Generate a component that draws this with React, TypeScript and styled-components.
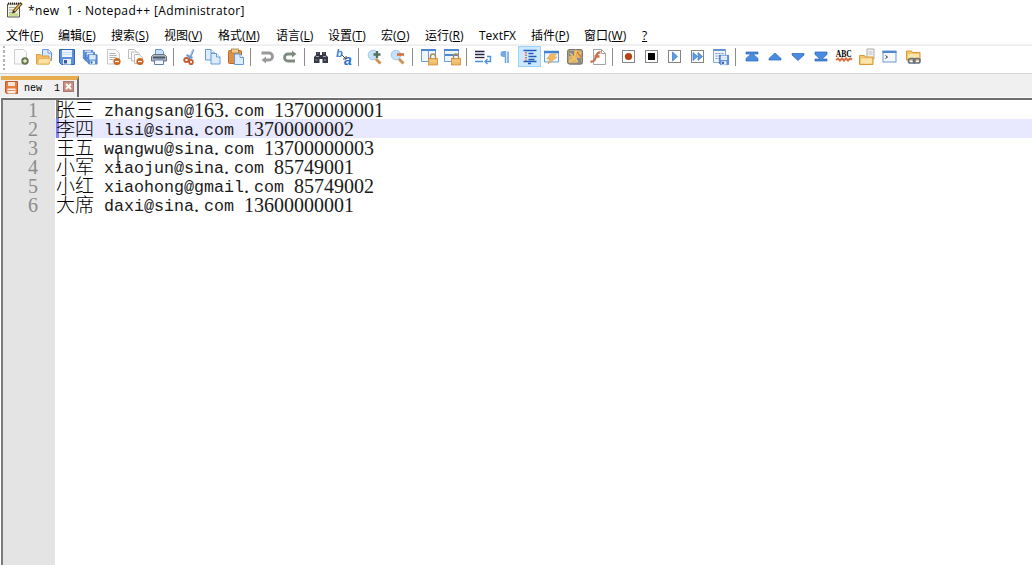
import React from "react";
import styled, { createGlobalStyle } from "styled-components";

const Global = createGlobalStyle`
  * { box-sizing: border-box; }
  html, body { margin: 0; padding: 0; background: #fff; overflow: hidden; }
`;

const Window = styled.div`
  width: 1032px;
  height: 565px;
  display: flex;
  flex-direction: column;
  background: #fff;
  overflow: hidden;
  color: #000;
  font-family: "Open Sans", "Noto Sans CJK SC", sans-serif;
`;

const TitleBar = styled.header`
  height: 24px;
  flex: none;
  display: flex;
  padding: 1px 0 0 6px;
  gap: 5px;
`;

const Title = styled.h1`
  margin: 0;
  font-size: 12px;
  font-weight: 400;
  line-height: 19px;
  letter-spacing: 0.37px;
  white-space: pre;
`;

const MenuBar = styled.nav`
  height: 22px;
  flex: none;
  display: flex;
  padding: 2px 0 0 6px;
  border-bottom: 2px solid #f0f0f0;
`;

const MenuItem = styled.span<{ $w: number }>`
  width: ${(p) => p.$w}px;
  flex: none;
  font-size: 12px;
  line-height: 19px;
  white-space: nowrap;
  u { text-underline-offset: 1px; text-decoration-thickness: 1px; }
`;

const ToolBar = styled.div`
  height: 28px;
  flex: none;
  display: flex;
  align-items: flex-start;
  border-bottom: 1px solid #d5d5d5;
`;

const Grip = styled.div`
  width: 2px;
  height: 26px;
  margin: 0 5px 0 3px;
  background: repeating-linear-gradient(#b4b4b4 0 2px, #fff 2px 4.5px);
`;

const ToolButton = styled.span<{ $on?: boolean }>`
  width: 23px;
  height: 21px;
  flex: none;
  padding: 3px 0 0 3px;
  background: ${(p) => (p.$on ? "#cce8ff" : "transparent")};
  box-shadow: ${(p) => (p.$on ? "inset 0 0 0 1px #99d1ff" : "none")};
`;

const Separator = styled.span`
  width: 8px;
  height: 18px;
  flex: none;
  margin-top: 2px;
  background: linear-gradient(90deg, transparent 2px, #8c8c8c 2px 3px, transparent 3px);
`;

const Glyph = styled.svg`
  display: block;
  flex: none;
  width: 17px;
  height: 17px;
  overflow: visible;
`;

const TabStrip = styled.div`
  height: 24px;
  flex: none;
  display: flex;
  padding: 2px 0 0 1px;
  background: #f0f0f0;
  border-bottom: 1px solid #fbfbfb;
`;

const Tab = styled.div`
  width: 78px;
  height: 21px;
  display: flex;
  border-top: 4px solid #e8ad4e;
  border-right: 2px solid #6e6e6e;
  padding: 1px 0 0 4px;
`;

const TabLabel = styled.span`
  width: 39px;
  margin-left: 2px;
  flex: none;
  font-family: "Liberation Mono", monospace;
  font-size: 10px;
  line-height: 15px;
  white-space: pre;
`;

const CloseMark = styled.svg`
  flex: none;
  display: block;
  width: 11px;
  height: 11px;
`;

const Editor = styled.main`
  flex: 1;
  margin-left: 1px;
  display: flex;
  border-top: 2px solid #6e6e6e;
  border-left: 2px solid #7b7b7b;
  position: relative;
`;

const Gutter = styled.div`
  width: 52px;
  flex: none;
  background: #e4e4e4;
  color: #8c8c8c;
  font-family: "Liberation Serif", serif;
  font-size: 20px;
  text-align: right;
  padding-right: 17px;
`;

const LineNumber = styled.div`
  height: 19px;
  line-height: 20px;
`;

const Lines = styled.div`
  flex: 1;
`;

const Line = styled.div<{ $active?: boolean; $mark?: string }>`
  height: 19px;
  line-height: 18px;
  display: flex;
  background: ${(p) => (p.$active ? "#e8e8ff" : "#fff")};
  &::before {
    content: "";
    width: 3px;
    margin: 0 -3px 0 1px;
    background: ${(p) => p.$mark ?? "transparent"};
  }
`;

const Code = styled.span`
  white-space: pre;
  color: #1a1a1a;
  font-family: "Liberation Mono", monospace;
  font-size: 16.66px;
`;

const Han = styled.span`
  font-family: "Noto Sans CJK SC", sans-serif;
  font-weight: 300;
  font-size: 19px;
  color: #000;
`;

const Latin = styled.span`
  line-height: 1;
  vertical-align: 1px;
`;

const Digits = styled.span`
  font-family: "Liberation Serif", serif;
  font-size: 20px;
`;

const Dot = styled(Digits)`
  letter-spacing: 5px;
`;

const Pointer = styled.svg`
  position: absolute;
  left: 112px;
  top: 52px;
  width: 6px;
  height: 16px;
`;

const Page = () => (
  <path d="M2.5.5h8l4 4v10.5h-12z" fill="#fafafa" stroke="#c9c9c9" />
);
const Minus = () => (
  <g>
    <circle cx="12" cy="12.5" r="3.6" fill="#d0641f" />
    <path d="M10 12.5h4" stroke="#fff" strokeWidth="1.3" />
  </g>
);
const Folder = ({ y = 0 }: { y?: number }) => (
  <g transform={`translate(0 ${y})`}>
    <path d="M.5 14.5v-9h5l1 1.500h7.500v7.500z" fill="#f6c368" stroke="#d99a39" />
    <path d="M2 8.500h11v5H2z" fill="#fde6ac" />
  </g>
);
const Lock = () => (
  <g>
    <path d="M9.500 10V7.500a2.500 2.500 0 0 1 5 0V10" fill="none" stroke="#a98d55" strokeWidth="1.4" />
    <rect x="7.500" y="9.500" width="9" height="6.500" fill="#eebb6a" stroke="#c98528" strokeWidth=".7" />
    <path d="M8.500 12h7" stroke="#fbd58a" />
  </g>
);
const Floppy = ({ x = 0, y = 0, s = 1 }: { x?: number; y?: number; s?: number }) => (
  <g transform={`translate(${x} ${y}) scale(${s})`}>
    <path d="M.5.500h15v15h-13l-2-2z" fill="#5c90dc" stroke="#3268b8" />
    <rect x="3" y="1" width="10" height="7" fill="#eef5fe" />
    <path d="M3 3.500h10M3 5.500h10" stroke="#bcd5f3" strokeWidth=".8" />
    <rect x="4" y="10" width="8" height="5.500" fill="#e8eef7" />
    <rect x="5" y="11" width="3" height="3.500" fill="#365d9c" />
  </g>
);
const Sheet = ({ x, y }: { x: number; y: number }) => (
  <g transform={`translate(${x} ${y})`}>
    <path d="M.5.500h5.500l3.500 3.500v7h-9z" fill="#deedfd" stroke="#6499db" />
    <path d="M6 .5v3.500h3.500" fill="#fff" stroke="#6499db" />
  </g>
);
const Media = ({ children }: { children: React.ReactNode }) => (
  <g>
    <rect x="1.500" y="1.500" width="12" height="12" fill="#fff" stroke="#858585" />
    {children}
  </g>
);

const icons: Record<string, React.ReactNode> = {
  new: <g><path d="M1.500.500h9l3 3v11.500h-12z" fill="#fbfbfb" stroke="#cfcfcf" /><circle cx="12" cy="12" r="3.700" fill="#66734f" /><path d="M10 12h4M12 10v4" stroke="#e5f3ce" strokeWidth="1.300" /></g>,
  open: <g><path d="M6.500.500h6l3 3v8h-9z" fill="#d6e8fc" stroke="#699bdc" /><path d="M12 .5v3.500h3.500" fill="#fff" stroke="#699bdc" /><path d="M.500 15V5.500h4l1 1.500h7.500v8z" fill="#f5bd60" stroke="#dba145" /><path d="M3 9.500h12l-2 5.500H1z" fill="#fde2a2" stroke="#e8b459" /></g>,
  save: <Floppy />,
  saveAll: <g><Floppy x={1} y={1} s={0.62} /><Floppy x={3} y={3} s={0.62} /><Floppy x={5.500} y={5.500} s={0.62} /></g>,
  close: <g><Page /><path d="M4.500 4.500h6M4.500 6.500h7M4.500 8.500h7M4.500 10.500h4" stroke="#b3b3b3" /><Minus /></g>,
  closeAll: <g fill="#fafafa" stroke="#bdbdbd"><path d="M.5.500h6l2 2v7h-8z" /><path d="M3.500 3h6l2 2v7h-8z" /><path d="M6.500 5.500h5l3 3v6h-8z" /><g stroke="none"><Minus /></g></g>,
  print: <g><path d="M4.500 6V.500h6l2 2V6" fill="#c7e0fc" stroke="#6396d8" /><path d="M.500 12V7.500l2-2h11l2 2V12z" fill="#aebac6" stroke="#667482" /><path d="M2 8.500h12" stroke="#4a5663" strokeWidth="2" /><path d="M3.500 11h9v4.500h-9z" fill="#f4f7fc" stroke="#667fa4" /></g>,
  cut: <g><path d="M11.500.500 7 11M4.500 6l6 3" stroke="#6d9bd1" strokeWidth="2" /><path d="M11 .5 8 7" stroke="#c5dcf5" strokeWidth=".8" /><ellipse cx="4.500" cy="11" rx="2.300" ry="2" fill="none" stroke="#c45b2c" strokeWidth="1.800" /><ellipse cx="9" cy="13" rx="1.800" ry="2.200" fill="none" stroke="#c45b2c" strokeWidth="1.800" /></g>,
  copy: <g><Sheet x={0} y={0} /><Sheet x={5.500} y={4} /></g>,
  paste: <g><rect x=".5" y="1.500" width="13" height="13" rx="1" fill="#dc9147" stroke="#b9692b" /><rect x="3.500" y="0" width="7" height="4" fill="#f3cf8e" stroke="#ac7c43" strokeWidth=".8" /><Sheet x={6} y={4.500} /></g>,
  undo: <g><path d="M2.500 4h7.500a3.500 3.500 0 0 1 0 7H6" fill="none" stroke="#999" strokeWidth="2.800" /><path d="M2.500 11 7 7.500v7z" fill="#999" /></g>,
  redo: <g><path d="M11 5H6a3.500 3.500 0 0 0 0 7h7" fill="none" stroke="#7f8b80" strokeWidth="2.800" /><path d="M14.500 5 10 1.500v7z" fill="#7f8b80" /></g>,
  find: <g><path d="M3 3h4v3h2V3h4v3l2 2v6H9.500v-4h-3v4H1V8l2-2z" fill="#343944" /><path d="M3 7.500h3M10 7.500h3M2.500 11h2M11 11h2" stroke="#9aa5b2" /><path d="M4 4h2M10 4h2" stroke="#6e7885" /></g>,
  replace: <g fontFamily="Liberation Sans" fontWeight="bold" fontStyle="italic" fill="#3a7fd6"><text x="0" y="8" fontSize="11">b</text><text x="8" y="15.500" fontSize="14" fill="#2f72cc">a</text><path d="m6 6 4 4m0-3v3H7" stroke="#444" fill="none" /></g>,
  zoomIn: <g><path d="m8.500 9.500 5 5" stroke="#cf9356" strokeWidth="3" /><circle cx="6" cy="6" r="4.800" fill="#c4e1fa" stroke="#a4c9eb" /><path d="M6.500 5.500h7M10 2v7" stroke="#52705b" strokeWidth="2.300" /></g>,
  zoomOut: <g><path d="m8.500 9.500 5 5" stroke="#cf9356" strokeWidth="3" /><circle cx="6" cy="6" r="4.800" fill="#c4e1fa" stroke="#a4c9eb" /><path d="M7 5.500h7" stroke="#d96d37" strokeWidth="2.600" /></g>,
  syncV: <g><path d="M.500.500h14v12H.500z" fill="#edf5fe" stroke="#719dce" /><path d="M0 1h15" stroke="#4f86d0" strokeWidth="2" /><path d="M7.500 2v10" stroke="#719dce" /><Lock /></g>,
  syncH: <g><path d="M.500.500h14v12H.500z" fill="#edf5fe" stroke="#719dce" /><path d="M0 1h15M1 6h14" stroke="#4f86d0" strokeWidth="1.800" /><Lock /></g>,
  wrap: <g fill="none"><path d="M0 2.500h9.500M0 5.500h9.500" stroke="#242447" strokeWidth="1.300" /><path d="M0 8.500h9.500" stroke="#242447" strokeWidth="1.300" /><path d="M12 7.500h3.500v5H11M0 12.500h8" stroke="#4c8cdd" strokeWidth="1.300" /><path d="m12.500 10-2.500 2.500 2.500 2.500" stroke="#4c8cdd" strokeWidth="1.300" /></g>,
  pilcrow: <g><path d="M7.500 2.500v11.500M10 2.500v11.500" stroke="#69a0e6" strokeWidth="1.500" /><path d="M11 2H5.500a3 3 0 0 0 0 6H8V2" fill="#75a9ea" /></g>,
  indent: <g><path d="M2.500 1.500h13M7.500 4.500h5M7.500 7.500h8M7.500 10.500h6M2.500 12.500h13M7 14.500h3" stroke="#205cc0" strokeWidth="1.400" /><path d="M5 3v9" stroke="#d26133" strokeWidth="1.500" strokeDasharray="1.500 1" /></g>,
  language: <g><path d="M.500 2.500h14v10.500h-14z" fill="#eff5fc" stroke="#699bd5" /><path d="M0 3h15" stroke="#4380ce" strokeWidth="2.500" /><path d="M6.500 5h6l-3 3h3.500L4 15l2-5H3z" fill="#f3bb5c" stroke="#d89a46" strokeWidth=".6" /></g>,
  map: <g><rect x=".7" y=".7" width="14.600" height="14.300" rx="2" fill="#d4b276" stroke="#777" strokeWidth="1.300" /><path d="M2 2h5v5H2zM10 9h4v5h-4z" fill="#82899b" /><path d="m2 13 5-3 2-8 3 5 2-4M3 4l8 9" stroke="#f4c654" strokeWidth="1.500" fill="none" /><path d="m10 3 4 5" stroke="#dc733c" strokeWidth="1.500" /></g>,
  functionList: <g><path d="M3.500.500h8l4 4v11h-12z" fill="#fff" stroke="#a5a5a5" /><path d="M11.500.500v4h4" fill="none" stroke="#a5a5a5" /><path d="M10.500 3.500C7 3 6.500 6 5.500 9c-1 3-2 4-5 3.500M4.500 7.500h5" fill="none" stroke="#ca6f4b" strokeWidth="2.300" /></g>,
  record: <Media><circle cx="7.500" cy="7.500" r="3.600" fill="#b94212" /></Media>,
  stop: <Media><rect x="4" y="4" width="7" height="7" fill="#000" /></Media>,
  play: <Media><path d="m5.500 3 5 4.500-5 4.500z" fill="#5c9ee7" stroke="#3b73bc" strokeWidth=".7" /></Media>,
  playMulti: <Media><path d="m3 3.500 4.500 4-4.500 4zM8 3.500l4.500 4-4.500 4z" fill="#5c9ee7" stroke="#3b73bc" strokeWidth=".7" /></Media>,
  saveMacro: <g><path d="M.5 .5h12v13H.5z" fill="#f0f5fc" stroke="#8aa9ce" /><path d="M.5 1h12" stroke="#6594d0" strokeWidth="2" /><path d="M2.500 4.500h8M2.500 7h8M2.500 9.500h5" stroke="#6f98ce" strokeDasharray="2 1" /><Floppy x={6} y={6} s={0.62} /></g>,
  first: <path d="M2 3h12v2H9l5 4.500V12H2V9.500L7 5H2z" fill="#4a8ce0" stroke="#2664b8" strokeWidth=".7" />,
  up: <path d="m8 4 6 5.500v1.500H2V9.500z" fill="#4a8ce0" stroke="#2664b8" strokeWidth=".7" />,
  down: <path d="M2 4.500h12v1.500l-6 5.500-6-5.500z" fill="#4a8ce0" stroke="#2664b8" strokeWidth=".7" />,
  last: <path d="M2 3h12v2.500L9 10h5v2H2v-2h5L2 5.500z" fill="#4a8ce0" stroke="#2664b8" strokeWidth=".7" />,
  spell: <g><text x="-.2" y="7.500" fontFamily="Liberation Serif" fontWeight="bold" fontSize="10" textLength="16" lengthAdjust="spacingAndGlyphs">ABC</text><path d="m0 11 2-1.500 2 2 2-2 2 2 2-2 2 2 2-2 2 1" fill="none" stroke="#d96f43" strokeWidth="2" /></g>,
  explore: <g><path d="M8 0h7v10H8z" fill="#f3f3f3" stroke="#aaa" /><path d="M9.500 3h4M9.500 5h4" stroke="#bbb" /><Folder y={1} /></g>,
  console: <g><rect x="1" y="2" width="13" height="11" fill="#f4f8fd" stroke="#6f99ce" /><path d="M.5 3h14" stroke="#4f88d2" strokeWidth="2" /><path d="m3.500 6.500 2 1.500-2 1.500" fill="none" stroke="#333" /></g>,
  folderLink: <g transform="translate(1 0)"><Folder y={-3.500} /><g fill="none" stroke="#67717e" strokeWidth="1.700"><rect x="2.500" y="9.500" width="6.500" height="4.500" rx="2" /><rect x="7.500" y="9.500" width="6.500" height="4.500" rx="2" /></g></g>,
};

const groups = [
  ["new", "open", "save", "saveAll", "close", "closeAll", "print"],
  ["cut", "copy", "paste"],
  ["undo", "redo"],
  ["find", "replace"],
  ["zoomIn", "zoomOut"],
  ["syncV", "syncH"],
  ["wrap", "pilcrow", "indent", "language", "map", "functionList"],
  ["record", "stop", "play", "playMulti", "saveMacro"],
  ["first", "up", "down", "last", "spell", "explore", "console", "folderLink"],
];

const menus: [string, string, number][] = [
  ["文件", "F", 52], ["编辑", "E", 53], ["搜索", "S", 53], ["视图", "V", 54],
  ["格式", "M", 58], ["语言", "L", 52], ["设置", "T", 53], ["宏", "O", 44],
  ["运行", "R", 54], ["TextFX", "", 52], ["插件", "P", 53], ["窗口", "W", 58], ["", "?", 20],
];

const rows = [
  ["张三", "zhangsan@163.com 13700000001"],
  ["李四", "lisi@sina.com 13700000002"],
  ["王五", "wangwu@sina.com 13700000003"],
  ["小军", "xiaojun@sina.com 85749001"],
  ["小红", "xiaohong@gmail.com 85749002"],
  ["大席", "daxi@sina.com 13600000001"],
];
const marks = ["#808080", "#8080f0"];

const tokens = (text: string) =>
  (text.match(/\d+|\.|[^\d.]+/g) ?? []).map((t, i) => {
    const Part = /\d/.test(t) ? Digits : t === "." ? Dot : Latin;
    return <Part key={i}>{t}</Part>;
  });

export default function App() {
  return (
    <Window>
      <Global />
      <TitleBar>
        <Glyph viewBox="0 0 17 17">
          <path d="M1.500 3h12v13h-12z" fill="#f3f1de" stroke="#55564e" />
          <path d="M2 2.500h11" stroke="#222" strokeWidth="2" strokeDasharray="1 1" />
          <path d="M3 6.500h8M3 9h7M3 11.500h4" stroke="#aaa" />
          <path d="M3 12h9v3H3z" fill="#c9dd91" />
          <path d="m15.500 2-8 9" stroke="#4b3a27" strokeWidth="3.200" />
          <path d="m14.500 3-6 7" stroke="#f0b647" strokeWidth="1.600" />
          <path d="m7 9.500-1 3 3-1z" fill="#333" />
        </Glyph>
        <Title>{"*new  1 - Notepad++ [Administrator]"}</Title>
      </TitleBar>
      <MenuBar>
        {menus.map(([name, key, w]) => (
          <MenuItem key={name + key} $w={w}>
            {name}
            {name && key ? <>(<u>{key}</u>)</> : <u>{key}</u>}
          </MenuItem>
        ))}
      </MenuBar>
      <ToolBar>
        <Grip />
        {groups.map((group, g) => (
          <React.Fragment key={g}>
            {g > 0 && <Separator />}
            {group.map((name) => (
              <ToolButton key={name} $on={name === "indent"}>
                <Glyph viewBox="0 0 17 17">{icons[name]}</Glyph>
              </ToolButton>
            ))}
          </React.Fragment>
        ))}
      </ToolBar>
      <TabStrip>
        <Tab>
          <Glyph viewBox="0 0 17 17">
            <path d="M.500.500h12v12h-11l-1-1z" fill="#e47c43" stroke="#c2592a" />
            <path d="M3 1h7v4H3z" fill="#fbe3d3" />
            <path d="M2.500 7.500h8v5h-8z" fill="#fff1e6" />
            <path d="M3 9.500h7" stroke="#dc8c60" />
          </Glyph>
          <TabLabel>{"new  1"}</TabLabel>
          <CloseMark viewBox="0 0 11 11">
            <rect x=".5" y=".5" width="10" height="10" fill="#c98f84" stroke="#a8786e" />
            <path d="m3 3 5 5m0-5-5 5" stroke="#fff" strokeWidth="1.800" />
          </CloseMark>
        </Tab>
      </TabStrip>
      <Editor>
        <Gutter>
          {rows.map((_, i) => <LineNumber key={i}>{i + 1}</LineNumber>)}
        </Gutter>
        <Lines>
          {rows.map(([han, rest], i) => (
            <Line key={i} $active={i === 1} $mark={marks[i]}>
              <Code><Han>{han}</Han> {tokens(rest)}</Code>
            </Line>
          ))}
        </Lines>
        <Pointer viewBox="0 0 6 16">
          <path d="M.500.500h2M3.500.500h2M3 1v14M.500 15.500h2M3.500 15.500h2" stroke="#000" />
        </Pointer>
      </Editor>
    </Window>
  );
}
